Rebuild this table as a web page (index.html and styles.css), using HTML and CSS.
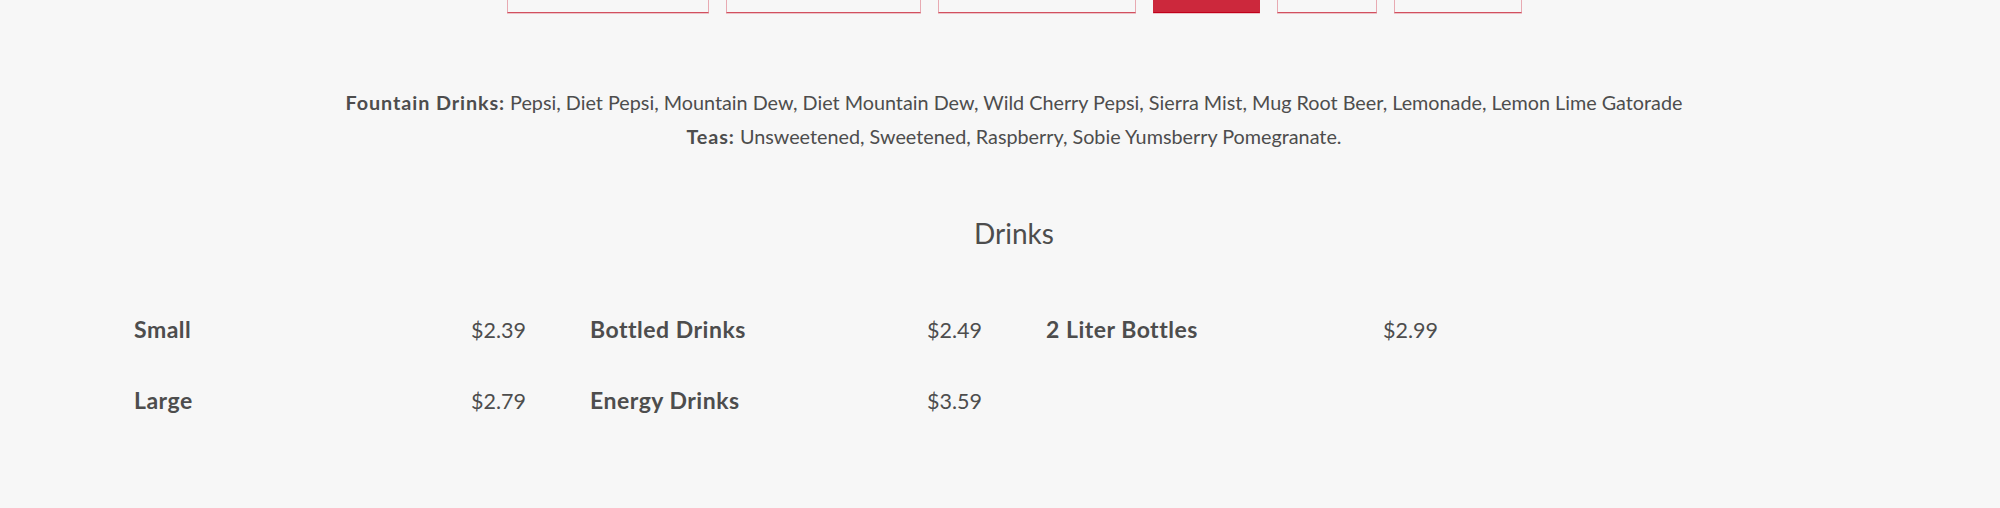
FILE: index.html
```html
<!DOCTYPE html>
<html lang="en">
<head>
<meta charset="utf-8">
<title>Drinks Menu</title>
<link rel="stylesheet" href="styles.css">
</head>
<body>
<main class="page">
  <nav class="tabs" aria-label="Menu categories">
    <a class="tab tab-1" href="#"></a>
    <a class="tab tab-2" href="#"></a>
    <a class="tab tab-3" href="#"></a>
    <a class="tab tab-4 is-active" href="#" aria-label="Drinks"></a>
    <a class="tab tab-5" href="#"></a>
    <a class="tab tab-6" href="#"></a>
  </nav>

  <section class="intro">
    <p><strong>Fountain Drinks:</strong> Pepsi, Diet Pepsi, Mountain Dew, Diet Mountain Dew, Wild Cherry Pepsi, Sierra Mist, Mug Root Beer, Lemonade, Lemon Lime Gatorade</p>
    <p><strong>Teas:</strong> Unsweetened, Sweetened, Raspberry, Sobie Yumsberry Pomegranate.</p>
  </section>

  <h2 class="section-title">Drinks</h2>

  <div class="menu-grid">
    <div class="item"><span class="item-name">Small</span><span class="item-price">$2.39</span></div>
    <div class="item"><span class="item-name">Bottled Drinks</span><span class="item-price">$2.49</span></div>
    <div class="item"><span class="item-name">2 Liter Bottles</span><span class="item-price">$2.99</span></div>
    <div class="item item-empty"></div>
    <div class="item"><span class="item-name">Large</span><span class="item-price">$2.79</span></div>
    <div class="item"><span class="item-name">Energy Drinks</span><span class="item-price">$3.59</span></div>
  </div>
</main>
</body>
</html>
```

FILE: styles.css
```css
* { box-sizing: border-box; }

html, body {
  margin: 0;
  padding: 0;
  background: #f7f7f7;
}

body {
  font-family: "Lato", "Noto Sans", sans-serif;
  color: #4d4d4d;
  overflow: hidden;
}

.page {
  padding-left: 28px;
}

.tabs {
  display: flex;
  justify-content: center;
  gap: 17px;
  margin-top: -35px;
}

.tab {
  display: block;
  height: 48px;
  border: 1px solid #e8aab2;
  border-bottom: 1px solid #d2505f;
  box-shadow: 0 1px 0 #ecc3c8;
  background: #f7f7f7;
}

.tab.is-active {
  background: #cc283c;
  border-color: #cc283c;
  border-bottom-color: #c1001b;
}

.tab-1 { width: 202px; }
.tab-2 { width: 195px; }
.tab-3 { width: 198px; }
.tab-4 { width: 107px; }
.tab-5 { width: 100px; }
.tab-6 { width: 128px; }

.intro {
  margin-top: 72px;
  text-align: center;
  font-size: 19.8px;
  line-height: 34px;
}

.intro p {
  margin: 0;
}

.intro strong {
  font-weight: 700;
  letter-spacing: 0.9px;
}

.section-title {
  margin: 63px 0 0;
  text-align: center;
  font-size: 28px;
  font-weight: 400;
  line-height: 34px;
}

.menu-grid {
  display: grid;
  grid-template-columns: repeat(4, 440px);
  column-gap: 16px;
  row-gap: 46px;
  justify-content: center;
  margin-top: 67px;
}

.item {
  display: flex;
  justify-content: space-between;
  align-items: baseline;
  padding: 0 24px;
  line-height: 24px;
}

.item-name {
  font-size: 23px;
  font-weight: 700;
  letter-spacing: 0.5px;
}

.item-price {
  font-size: 21.5px;
}
```
